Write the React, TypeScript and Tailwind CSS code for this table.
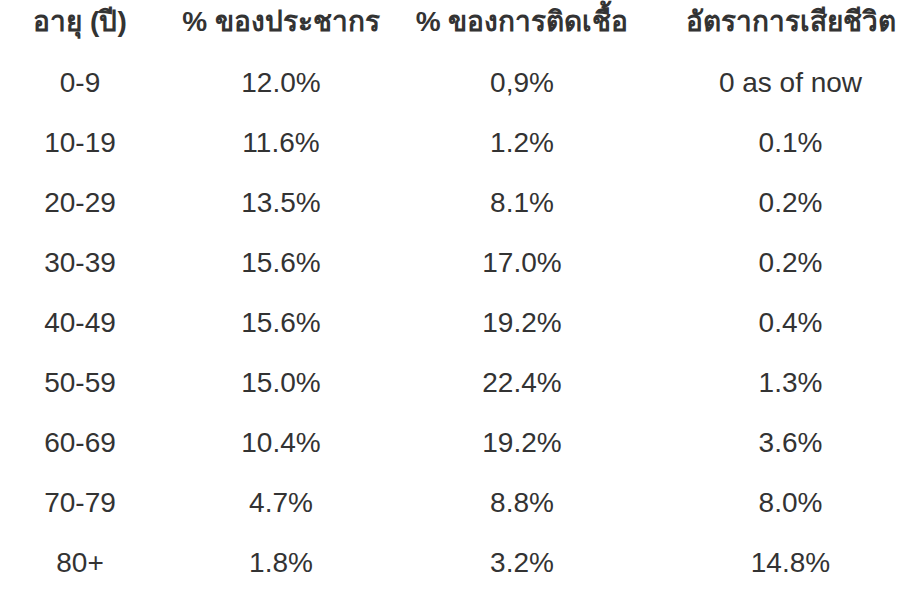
// Age breakdown table: population share, infection share and fatality rate.

const headers = ['อายุ (ปี)', '% ของประชากร', '% ของการติดเชื้อ', 'อัตราการเสียชีวิต']

const rows: [string, string, string, string][] = [
  ['0-9', '12.0%', '0,9%', '0 as of now'],
  ['10-19', '11.6%', '1.2%', '0.1%'],
  ['20-29', '13.5%', '8.1%', '0.2%'],
  ['30-39', '15.6%', '17.0%', '0.2%'],
  ['40-49', '15.6%', '19.2%', '0.4%'],
  ['50-59', '15.0%', '22.4%', '1.3%'],
  ['60-69', '10.4%', '19.2%', '3.6%'],
  ['70-79', '4.7%', '8.8%', '8.0%'],
  ['80+', '1.8%', '3.2%', '14.8%'],
]

const cols = 'grid grid-cols-[160px_242px_240px_273px]'

export default function App() {
  return (
    <div
      className="w-[915px] h-[599px] overflow-hidden bg-white text-[#333]"
      style={{ fontFamily: '"Liberation Sans", Arial, "Noto Sans", sans-serif' }}
    >
      {/* ── header ── */}
      <div className={`${cols} h-[53px] pb-[9px] items-center text-[28px] font-bold`}>
        {headers.map((h, i) => (
          <div key={h} className={`text-center whitespace-nowrap ${i === 3 ? 'pl-[24px]' : ''}`}>
            {h}
          </div>
        ))}
      </div>

      {/* ── body ── */}
      {rows.map((r) => (
        <div key={r[0]} className={`${cols} h-[60px] items-center text-[28px]`}>
          {r.map((c, i) => (
            <div key={i} className={`text-center whitespace-nowrap ${i === 3 ? 'pl-[24px]' : ''}`}>
              {c}
            </div>
          ))}
        </div>
      ))}
    </div>
  )
}
